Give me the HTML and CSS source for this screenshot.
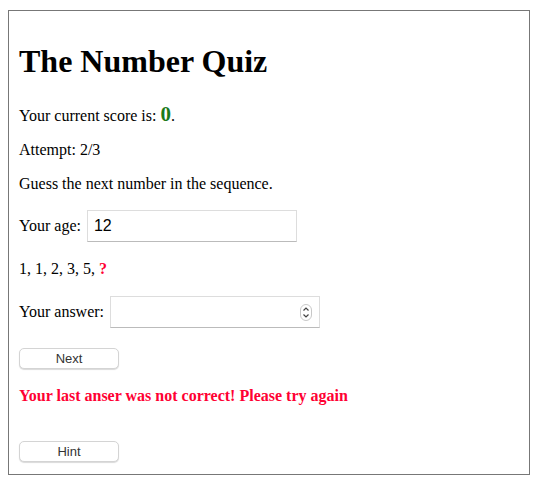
FILE: index.html
```html
<!DOCTYPE html>
<html>
<head>
<meta charset="utf-8">
<link rel="stylesheet" href="styles.css">
<title>The Number Quiz</title>
</head>
<body>
<form class="quiz">
  <h1 class="title">The Number Quiz</h1>
  <p class="line">Your current score is: <span class="score">0</span>.</p>
  <p class="line">Attempt: 2/3</p>
  <p class="line">Guess the next number in the sequence.</p>
  <p class="line field">Your age: <input class="text-input" type="text" value="12"></p>
  <p class="line">1, 1, 2, 3, 5, <span class="mark">?</span></p>
  <p class="line field answer">Your answer:
    <span class="num-wrap">
      <input class="text-input number" type="number">
      <svg class="spinner" width="12" height="17" viewBox="0 0 12 17" aria-hidden="true">
        <rect x="0.5" y="0.5" width="11" height="16" rx="5.5" fill="#fff" stroke="#c8c8c8"/>
        <path d="M3.5 6.5 L6 4 L8.5 6.5" fill="none" stroke="#444" stroke-width="1.2"/>
        <path d="M3.5 10.5 L6 13 L8.5 10.5" fill="none" stroke="#444" stroke-width="1.2"/>
      </svg>
    </span>
  </p>
  <div class="btn-row"><button type="button" class="btn">Next</button></div>
  <p class="error">Your last anser was not correct! Please try again</p>
  <div class="btn-row hint-row"><button type="button" class="btn">Hint</button></div>
</form>
</body>
</html>
```
FILE: styles.css
```css
html, body {
  background: #fff;
}
body {
  margin: 10px 8px;
  font-family: "Liberation Serif", "Times New Roman", serif;
  font-size: 16px;
  color: #000;
}
.quiz {
  width: 500px;
  padding: 1px 10px 12px;
  border: 1px solid #777;
}
.title {
  font-size: 32px;
  font-weight: bold;
  margin: 31px 0 25px;
}
.line {
  margin: 16px 0;
  line-height: 18px;
}
.score {
  color: #1b7a1b;
  font-weight: bold;
  font-size: 21px;
}
.mark {
  color: #ff0033;
  font-weight: bold;
}
.field {
  display: flex;
  align-items: center;
  gap: 6px;
  margin: 17px 0 18px;
}
.answer {
  margin-top: 18px;
}
.num-wrap {
  position: relative;
  display: inline-block;
  line-height: 0;
}
.text-input {
  box-sizing: border-box;
  width: 210px;
  height: 32px;
  border: 1px solid #ddd;
  border-bottom-color: #bbb;
  padding: 0 6px;
  font-family: "Liberation Sans", Arial, sans-serif;
  font-size: 16px;
  color: #000;
  outline: none;
  background: #fff;
}
.number {
  -moz-appearance: textfield;
  appearance: textfield;
}
.number::-webkit-inner-spin-button,
.number::-webkit-outer-spin-button {
  -webkit-appearance: none;
  margin: 0;
}
.spinner {
  position: absolute;
  right: 8px;
  top: 8px;
}
.btn-row {
  margin: 20px 0 0;
}
.hint-row {
  margin-top: 36px;
}
.btn {
  box-sizing: border-box;
  width: 100px;
  height: 21px;
  background: #fff;
  border: 1px solid #d4d4d4;
  border-radius: 5px;
  box-shadow: 0 1px 1px rgba(0,0,0,0.15);
  font-family: "Liberation Sans", Arial, sans-serif;
  font-size: 13px;
  color: #333;
  padding: 0;
}
.error {
  margin: 18px 0 0;
  color: #ff0033;
  font-weight: bold;
  line-height: 18px;
}
```
